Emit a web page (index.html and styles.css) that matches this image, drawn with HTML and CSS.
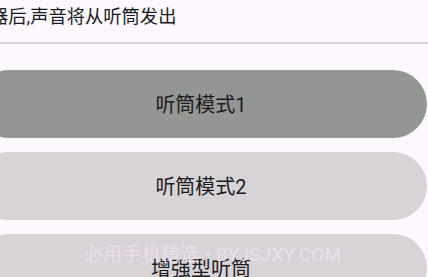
FILE: index.html
```html
<!DOCTYPE html>
<html lang="zh-CN">
<head>
<meta charset="utf-8">
<link rel="stylesheet" href="styles.css">
</head>
<body>
<div class="page">
  <div class="hint">器后,声音将从听筒发出</div>
  <div class="divider"></div>
  <div class="modes">
    <div class="mode mode-active">听筒模式1</div>
    <div class="mode">听筒模式2</div>
    <div class="mode">增强型听筒</div>
  </div>
  <div class="watermark">必用手机精选 • BYJSJXY.COM</div>
</div>
</body>
</html>
```
FILE: styles.css
```css
html, body {
  margin: 0;
  padding: 0;
  background: #fdf8fd;
  overflow: hidden;
}
.page {
  position: relative;
  width: 428px;
  height: 277px;
  overflow: hidden;
  font-family: Roboto, "Noto Sans CJK SC", sans-serif;
  color: #1c1b1f;
}
.hint {
  margin-left: -10px;
  padding-top: 4px;
  height: 25px;
  line-height: 25px;
  font-size: 18.3px;
  white-space: nowrap;
}
.divider {
  margin-top: 13px;
  height: 1.5px;
  background: #d6d1d6;
}
.modes {
  display: flex;
  flex-direction: column;
  gap: 14px;
  margin-top: 26px;
  margin-left: -25px;
  width: 452px;
}
.mode {
  height: 68px;
  border-radius: 34px;
  background: #d8d3d7;
  display: flex;
  align-items: center;
  justify-content: center;
  font-size: 20px;
  flex-shrink: 0;
}
.mode-active {
  background: #949693;
}
.watermark {
  position: absolute;
  left: 84px;
  top: 242px;
  font-size: 19px;
  line-height: 25px;
  letter-spacing: 0.25px;
  color: #ecdeec;
  white-space: nowrap;
}
```
